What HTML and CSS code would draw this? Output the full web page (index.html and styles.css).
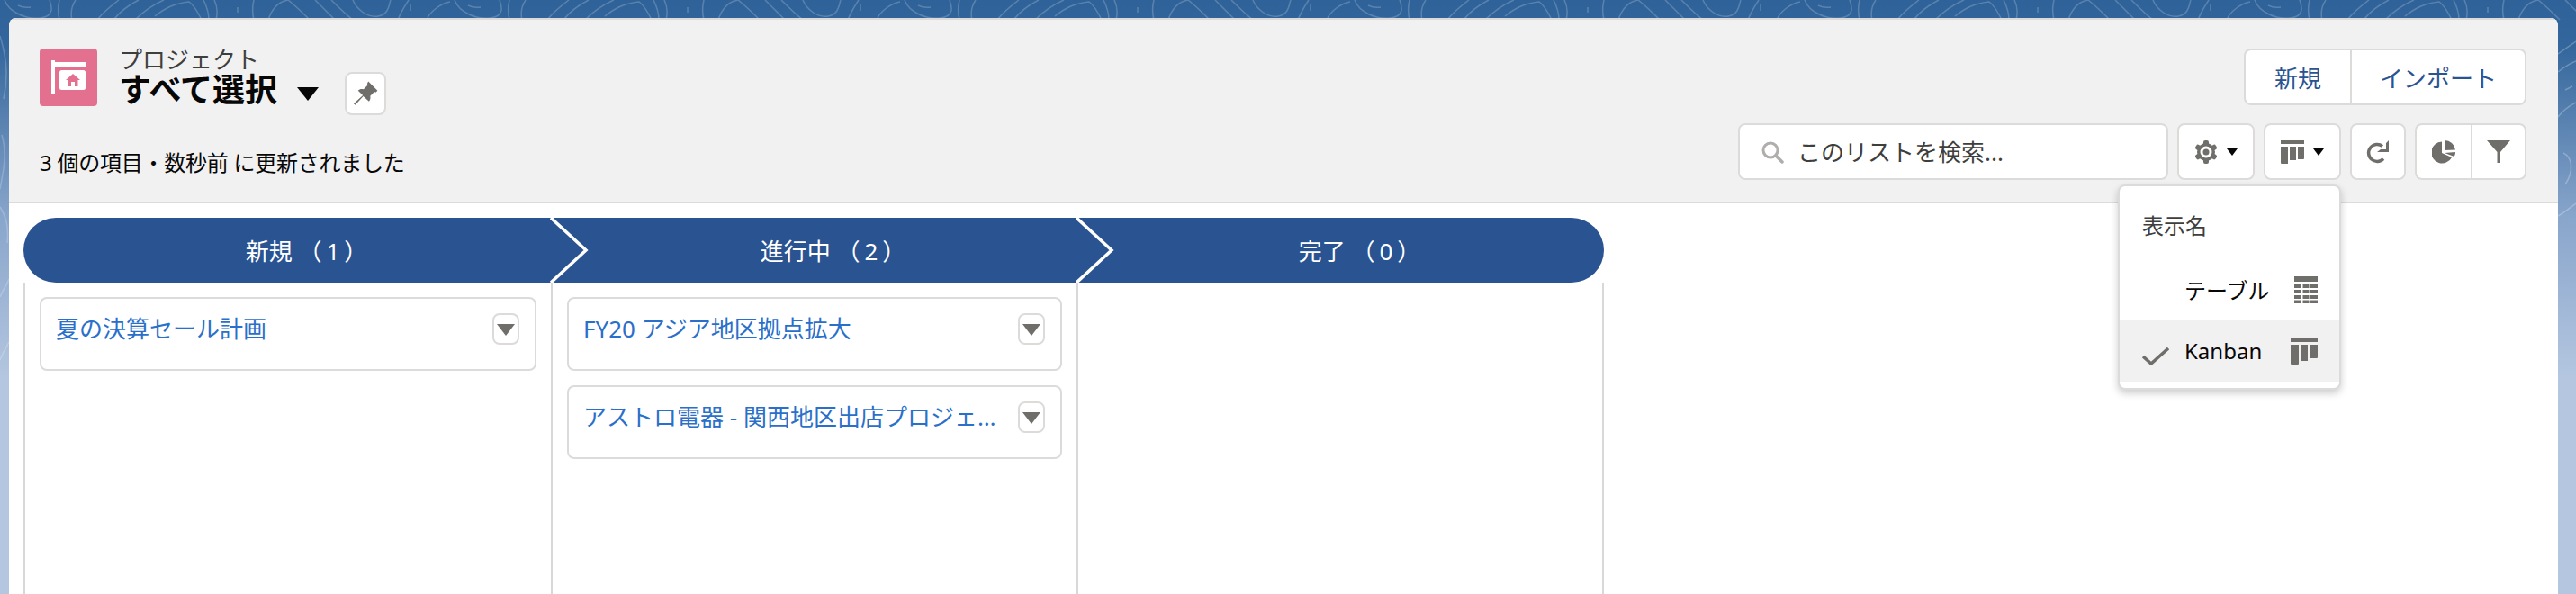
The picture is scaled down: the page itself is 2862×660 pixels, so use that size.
FILE: index.html
```html
<!DOCTYPE html>
<html lang="ja">
<head>
  <meta charset="UTF-8">
  <title>プロジェクト</title>
  <link rel="stylesheet" href="styles.css">
</head>
<body>

  <!-- background contour lines -->
  <svg class="contours" width="2862" height="660">
    <defs>
      <pattern id="lines" width="500" height="660" patternUnits="userSpaceOnUse">
        <g fill="none" stroke="#fff" stroke-opacity=".2" stroke-width="1.5">
          <path d="M5 0C10 14 30 22 45 20S58 8 55 0"/>
          <path d="M20 6C24 8 28 9 34 8"/>
          <path d="M66 0C64 8 64 14 66 22"/>
          <path d="M80 22C78 14 80 6 84 0"/>
          <path d="M108 22C116 12 124 6 132 0"/>
          <path d="M126 22C134 12 146 4 154 0"/>
          <path d="M150 22C158 14 168 6 182 0"/>
          <path d="M172 18C182 10 192 4 210 2C216 6 220 14 224 22"/>
          <path d="M226 0C230 8 232 14 232 22"/>
          <path d="M238 0C242 8 242 14 240 22"/>
          <path d="M264 8V14"/>
          <path d="M282 0C280 8 280 14 282 22"/>
          <path d="M298 22C302 10 308 2 320 0C330 8 338 16 344 22"/>
          <path d="M350 0C358 8 366 16 372 22"/>
          <path d="M368 0C376 8 384 16 392 22"/>
          <path d="M392 0C396 10 408 20 420 18S432 6 434 0"/>
          <path d="M442 22C446 12 450 6 454 0"/>
          <path d="M456 4V12"/>
          <path d="M474 22C478 12 490 4 500 2"/>
          <path d="M0 40C6 60 10 80 4 110"/>
          <path d="M2 150C8 170 4 190 0 210"/>
          <path d="M0 230C6 240 10 250 8 270"/>
          <path d="M0 330C4 320 8 316 10 310"/>
          <path d="M0 400C4 390 8 384 10 380"/>
        </g>
      </pattern>
    </defs>
    <rect width="2862" height="660" fill="url(#lines)"/>
    <g fill="none" stroke="#fff" stroke-opacity=".25" stroke-width="1.5">
      <path d="M2842 60C2850 54 2856 50 2862 46"/>
      <path d="M2842 80C2850 74 2856 70 2862 68"/>
      <path d="M2850 100L2858 96"/>
      <path d="M2842 130C2850 120 2858 116 2862 114"/>
      <path d="M2848 170C2858 175 2860 190 2850 205"/>
      <path d="M2842 240C2850 236 2856 230 2862 226"/>
    </g>
  </svg>

  <main class="panel">
    <header class="list-head">
      <div class="head-left">
        <div class="title-row">
          <span class="obj-icon">
            <svg width="64" height="64" viewBox="0 0 64 64">
              <path fill="#fff" d="M13 13h4v2h34v5H17v31h-4z"/>
              <rect x="22" y="24" width="29" height="22" rx="2.5" fill="#fff"/>
              <path fill="#e3708f" d="M37 28l8 7h-2.5v7H39v-5h-4v5h-3.500v-7H29z"/>
            </svg>
          </span>
          <div class="title-text">
            <div class="obj-name">プロジェクト</div>
            <div class="view-line">
              <h1>すべて選択</h1>
              <span class="title-caret"></span>
              <button class="btn pin-btn">
                <svg width="30" height="30" viewBox="0 0 28 28">
                  <path fill="#706e6b" d="M17 1.500l9.500 9.500-1.800 1.800-1.400-.7-4.400 4.400c.6 2.200.1 4.200-1.300 5.600L11.700 16.700 3.400 26 1.800 24.400l9.500-8.500-5-5c1.400-1.400 3.500-1.900 5.700-1.300l4.400-4.400-.7-1.400z"/>
                </svg>
              </button>
            </div>
          </div>
        </div>
        <p class="status">3 個の項目・数秒前 に更新されました</p>
      </div>

      <div class="head-right">
        <div class="btn-group actions">
          <button class="btn text-btn new-btn">新規</button>
          <button class="btn text-btn import-btn">インポート</button>
        </div>
        <div class="toolbar">
          <label class="search">
            <svg width="26" height="26" viewBox="0 0 26 26">
              <circle cx="11" cy="11" r="8" fill="none" stroke="#b0adab" stroke-width="3"/>
              <path d="M17 17l7 7" stroke="#b0adab" stroke-width="3.500" stroke-linecap="round"/>
            </svg>
            <input type="text" placeholder="このリストを検索...">
          </label>

          <button class="btn tool-btn caret-btn">
            <svg width="26" height="26" viewBox="0 0 26 26">
              <g fill="#706e6b">
                <circle cx="13" cy="13" r="10"/>
                <rect x="10" y="0" width="6" height="26" rx="2"/>
                <rect x="10" y="0" width="6" height="26" rx="2" transform="rotate(60 13 13)"/>
                <rect x="10" y="0" width="6" height="26" rx="2" transform="rotate(120 13 13)"/>
              </g>
              <circle cx="13" cy="13" r="6.500" fill="#fff"/>
              <circle cx="13" cy="13" r="3.500" fill="#706e6b"/>
            </svg>
            <span class="mini-caret"></span>
          </button>

          <div class="menu-wrap">
            <button class="btn tool-btn caret-btn">
              <svg width="26" height="26" viewBox="0 0 26 26">
                <path fill="#706e6b" d="M0 0h26v4H0zM0 7h8v19H1a1 1 0 0 1-1-1zM10 7h7v15h-7zM19 7h7v13a1 1 0 0 1-1 1h-6z"/>
              </svg>
              <span class="mini-caret"></span>
            </button>
            <div class="view-menu">
              <div class="menu-label">表示名</div>
              <div class="menu-row">
                <span class="check"></span>
                <span class="row-name">テーブル</span>
                <svg width="26" height="30" viewBox="0 0 26 30">
                  <path fill="#706e6b" d="M0 0h26v6H0zM0 9h8v4H0zM9.500 9h7v4h-7zM18 9h8v4h-8zM0 15h8v4H0zM9.500 15h7v4h-7zM18 15h8v4h-8zM0 21h8v4H0zM9.500 21h7v4h-7zM18 21h8v4h-8zM0 26.500h8V30H0zM9.500 26.500h7V30h-7zM18 26.500h8V30h-8z"/>
                </svg>
              </div>
              <div class="menu-row active">
                <span class="check">
                  <svg width="30" height="20" viewBox="0 0 30 20">
                    <path d="M1 10l9 8L29 1" fill="none" stroke="#706e6b" stroke-width="3.500"/>
                  </svg>
                </span>
                <span class="row-name">Kanban</span>
                <svg width="30" height="30" viewBox="0 0 30 30">
                  <path fill="#706e6b" d="M0 0h30v5H0zM0 8h9v21a1 1 0 0 1-1 1H1a1 1 0 0 1-1-1zM11 8h8v18h-8zM21 8h9v14a1 1 0 0 1-1 1h-8z"/>
                </svg>
              </div>
            </div>
          </div>

          <button class="btn tool-btn refresh-btn">
            <svg width="26" height="26" viewBox="0 0 26 26">
              <path d="M19 19.500a9.500 9.500 0 1 1-1-14" transform="translate(0 1)" fill="none" stroke="#706e6b" stroke-width="3.500"/>
              <path fill="#706e6b" d="M25 0v13H12l4-3h6V3z"/>
            </svg>
          </button>

          <div class="btn-group">
            <button class="btn tool-btn chart-btn">
              <svg width="26" height="26" viewBox="0 0 26 26">
                <path fill="#706e6b" d="M11 1.500V14l11 5A12 12 0 1 1 11 1.500z"/>
                <path fill="#706e6b" d="M14 0a12 12 0 0 1 12 10.500L14 11z"/>
                <path fill="#706e6b" d="M14 14l12-1c0 2-.5 3.500-1.300 5z"/>
              </svg>
            </button>
            <button class="btn tool-btn filter-btn">
              <svg width="26" height="26" viewBox="0 0 26 26">
                <path fill="#706e6b" d="M0 0h26L15 13v12h-3.500V13z"/>
              </svg>
            </button>
          </div>
        </div>
      </div>
    </header>

    <section class="board">
      <div class="path">
        <div class="stage stage-first">
          <span>新規 <span class="count">（1）</span></span>
          <svg class="chevron" width="44" height="72" viewBox="0 0 44 72"><path d="M1 0l39 36L1 72" /></svg>
        </div>
        <div class="stage stage-mid">
          <span>進行中 <span class="count">（2）</span></span>
          <svg class="chevron" width="44" height="72" viewBox="0 0 44 72"><path d="M1 0l39 36L1 72" /></svg>
        </div>
        <div class="stage stage-last">
          <span>完了 <span class="count">（0）</span></span>
        </div>
      </div>

      <div class="columns">
        <div class="col col-first">
          <div class="card">
            <a class="card-link">夏の決算セール計画</a>
            <button class="card-menu"><span class="gray-caret"></span></button>
          </div>
        </div>
        <div class="col col-mid">
          <div class="card">
            <a class="card-link">FY20 アジア地区拠点拡大</a>
            <button class="card-menu"><span class="gray-caret"></span></button>
          </div>
          <div class="card">
            <a class="card-link">アストロ電器 - 関西地区出店プロジェクト</a>
            <button class="card-menu"><span class="gray-caret"></span></button>
          </div>
        </div>
        <div class="col col-last"></div>
      </div>
    </section>
  </main>

</body>
</html>
```

FILE: styles.css
```css
* {
  box-sizing: border-box;
}
body {
  position: relative;
  margin: 0;
  width: 2862px;
  height: 660px;
  padding: 20px 20px 0 10px;
  overflow: hidden;
  font-family: "Noto Sans", "Noto Sans CJK JP", sans-serif;
  color: #080707;
  background: linear-gradient(180deg, #2f6299 0, #33669c 50px, #88a5cb 240px, #b4c6e0 420px);
}
.contours {
  position: absolute;
  left: 0;
  top: 0;
}
button {
  font-family: inherit;
  padding: 0;
  margin: 0;
}

.panel {
  position: relative;
  height: 640px;
  background: #fff;
  border-radius: 8px 8px 0 0;
  overflow: hidden;
}

/* header */
.list-head {
  display: flex;
  justify-content: space-between;
  height: 206px;
  padding: 32px 35px 0 34px;
  background: #f1f1f1;
  border-top: 2px solid #dddbda;
  border-bottom: 2px solid #dddbda;
}
.title-row {
  display: flex;
}
.obj-icon {
  display: block;
  width: 64px;
  height: 64px;
  border-radius: 4px;
  background: #e3708f;
}
.title-text {
  margin: -2px 0 0 24px;
}
.obj-name {
  font-size: 26px;
  line-height: 28px;
  color: #3e3e3c;
}
.view-line {
  display: flex;
  align-items: flex-start;
}
h1 {
  margin: 0;
  font-size: 36px;
  line-height: 40px;
  font-weight: 700;
}
.title-caret {
  margin: 17px 29px 0 22px;
  border-left: 12px solid transparent;
  border-right: 12px solid transparent;
  border-top: 15px solid #080707;
}
.status {
  margin: 38px 0 0;
  font-size: 24px;
  line-height: 30px;
  letter-spacing: -.25px;
}

/* buttons */
.btn {
  display: flex;
  align-items: center;
  justify-content: center;
  height: 63px;
  background: #fff;
  border: 2px solid #dddbda;
  border-radius: 8px;
}
.pin-btn {
  width: 46px;
  height: 48px;
}
.head-right {
  display: flex;
  flex-direction: column;
  align-items: flex-end;
  gap: 20px;
}
.btn-group {
  display: flex;
}
.btn-group .btn:first-child {
  border-radius: 8px 0 0 8px;
  border-right: 0;
}
.btn-group .btn:last-child {
  border-radius: 0 8px 8px 0;
}
.text-btn {
  font-size: 26px;
  color: #2a5391;
}
.new-btn {
  width: 118px;
}
.import-btn {
  width: 196px;
}
.toolbar {
  display: flex;
  gap: 10px;
}
.search {
  display: flex;
  align-items: center;
  width: 478px;
  height: 63px;
  padding-left: 23px;
  background: #fff;
  border: 2px solid #dddbda;
  border-radius: 8px;
}
.search input {
  width: 400px;
  margin-left: 15px;
  padding: 0;
  border: 0;
  outline: 0;
  font-family: inherit;
  font-size: 26px;
}
.search input::placeholder {
  color: #3e3e3c;
  opacity: 1;
}
.caret-btn {
  gap: 10px;
  width: 86px;
}
.mini-caret {
  border-left: 6px solid transparent;
  border-right: 6px solid transparent;
  border-top: 8px solid #080707;
}
.refresh-btn {
  width: 62px;
}
.chart-btn {
  width: 62px;
}
.filter-btn {
  width: 62px;
}

/* view switcher menu */
.menu-wrap {
  position: relative;
}
.view-menu {
  position: absolute;
  right: 0;
  top: 68px;
  z-index: 5;
  width: 248px;
  padding-bottom: 7px;
  background: #fff;
  border: 2px solid #dddbda;
  border-radius: 8px;
  box-shadow: 0 4px 8px rgba(0, 0, 0, .2);
}
.menu-label {
  padding: 29px 25px 22px;
  font-size: 24px;
  line-height: 30px;
  color: #3e3e3c;
}
.menu-row {
  display: flex;
  align-items: center;
  height: 68px;
  padding: 0 24px 0 25px;
  font-size: 24px;
}
.menu-row.active {
  background: #f1f1f1;
}
.check {
  display: block;
  width: 47px;
  height: 20px;
}
.row-name {
  flex: 1;
  padding-bottom: 2px;
}

/* kanban board */
.board {
  padding: 16px 0 0 16px;
}
.path {
  display: flex;
  width: 1756px;
  height: 72px;
}
.stage {
  position: relative;
  display: flex;
  align-items: center;
  justify-content: center;
  padding-left: 48px;
  background: #2a5391;
  color: #fff;
  font-size: 26px;
}
.count {
  letter-spacing: 5px;
}
.stage-first {
  width: 586px;
  border-radius: 36px 0 0 36px / 36px 0 0 36px;
}
.stage-mid {
  width: 584px;
}
.stage-last {
  width: 586px;
  border-radius: 0 36px 36px 0;
}
.chevron {
  position: absolute;
  right: -43px;
  top: 0;
  z-index: 1;
}
.chevron path {
  fill: none;
  stroke: #fff;
  stroke-width: 3.5;
}
.columns {
  display: flex;
  height: 400px;
}
.col {
  padding: 16px;
  border-left: 2px solid #d8d8d8;
}
.col-first {
  width: 586px;
}
.col-mid {
  width: 584px;
}
.col-last {
  width: 586px;
  border-right: 2px solid #d8d8d8;
}
.card {
  display: flex;
  align-items: flex-start;
  justify-content: space-between;
  gap: 24px;
  height: 82px;
  margin-bottom: 16px;
  padding: 16px 17px 0 16px;
  border: 2px solid #dddbda;
  border-radius: 8px;
}
.card-link {
  min-width: 0;
  font-size: 26px;
  line-height: 35px;
  color: #2a6fc9;
  white-space: nowrap;
  overflow: hidden;
  text-overflow: ellipsis;
}
.card-menu {
  flex: none;
  display: flex;
  align-items: center;
  justify-content: center;
  width: 30px;
  height: 35px;
  background: #fff;
  border: 2px solid #dddbda;
  border-radius: 8px;
}
.gray-caret {
  margin-top: 2px;
  border-left: 10px solid transparent;
  border-right: 10px solid transparent;
  border-top: 13px solid #706e6b;
}
```
